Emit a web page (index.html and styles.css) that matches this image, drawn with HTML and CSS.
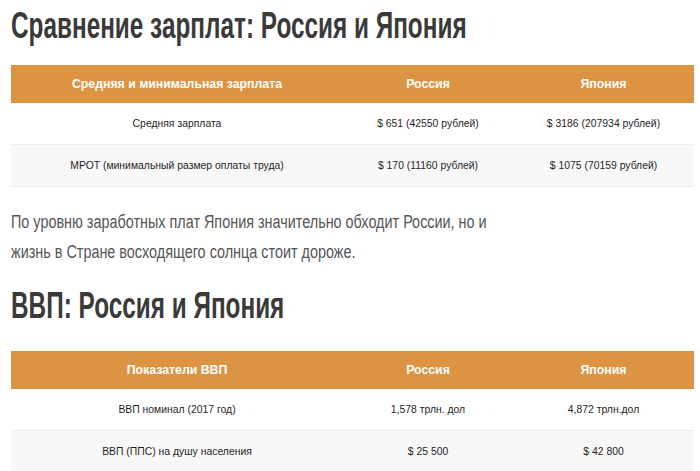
FILE: index.html
```html
<!DOCTYPE html>
<html lang="ru">
<head>
<meta charset="utf-8">
<link rel="stylesheet" href="styles.css">
</head>
<body>
<article class="post">
  <h2 class="title title-first"><span class="squeeze">Сравнение зарплат: Россия и Япония</span></h2>
  <table class="data">
    <thead>
      <tr><th class="c1">Средняя и минимальная зарплата</th><th class="c2">Россия</th><th class="c3">Япония</th></tr>
    </thead>
    <tbody>
      <tr><td>Средняя зарплата</td><td>$ 651 (42550 рублей)</td><td>$ 3186 (207934 рублей)</td></tr>
      <tr><td>МРОТ (минимальный размер оплаты труда)</td><td>$ 170 (11160 рублей)</td><td>$ 1075 (70159 рублей)</td></tr>
    </tbody>
  </table>
  <p class="text"><span class="squeeze-text">По уровню заработных плат Япония значительно обходит России, но и<br>жизнь в Стране восходящего солнца стоит дороже.</span></p>
  <h2 class="title title-second"><span class="squeeze">ВВП: Россия и Япония</span></h2>
  <table class="data">
    <thead>
      <tr><th class="c1">Показатели ВВП</th><th class="c2">Россия</th><th class="c3">Япония</th></tr>
    </thead>
    <tbody>
      <tr><td>ВВП номинал (2017 год)</td><td>1,578 трлн. дол</td><td>4,872 трлн.дол</td></tr>
      <tr><td>ВВП (ППС) на душу населения</td><td>$ 25 500</td><td>$ 42 800</td></tr>
    </tbody>
  </table>
</article>
</body>
</html>
```
FILE: styles.css
```css
html, body {
  margin: 0;
  padding: 0;
  background: #fff;
}
.post {
  padding: 0 6px 0 11px;
  font-family: "Liberation Sans", Arial, sans-serif;
}
.title {
  margin: 0;
  font-size: 36px;
  line-height: 48px;
  height: 48px;
  font-weight: bold;
  color: #3a3a3a;
  white-space: nowrap;
}
.title-first {
  padding-top: 2px;
  margin-bottom: 15px;
}
.title-second {
  margin-top: 15px;
  margin-bottom: 21px;
}
.squeeze {
  display: inline-block;
  transform: scaleX(0.676);
  transform-origin: 0 50%;
}
.data {
  width: 683px;
  border-collapse: collapse;
  font-size: 10.4px;
  color: #1f1f1f;
}
.data th {
  background: #dc9443;
  color: #fff;
  font-size: 12.3px;
  font-weight: bold;
  height: 38px;
  padding: 0;
  text-align: center;
}
.data .c1 { width: 332px; }
.data .c2 { width: 170px; }
.data .c3 { width: 181px; }
.data td {
  height: 41px;
  padding: 0;
  text-align: center;
  border-bottom: 1px solid #ececec;
}
.data tbody tr:nth-child(even) td {
  background: #f8f8f8;
}
.text {
  margin: 20px 0 0;
  font-size: 18px;
  line-height: 30px;
  color: #555;
  white-space: nowrap;
}
.squeeze-text {
  display: inline-block;
  transform: scaleX(0.8);
  transform-origin: 0 50%;
}
```
